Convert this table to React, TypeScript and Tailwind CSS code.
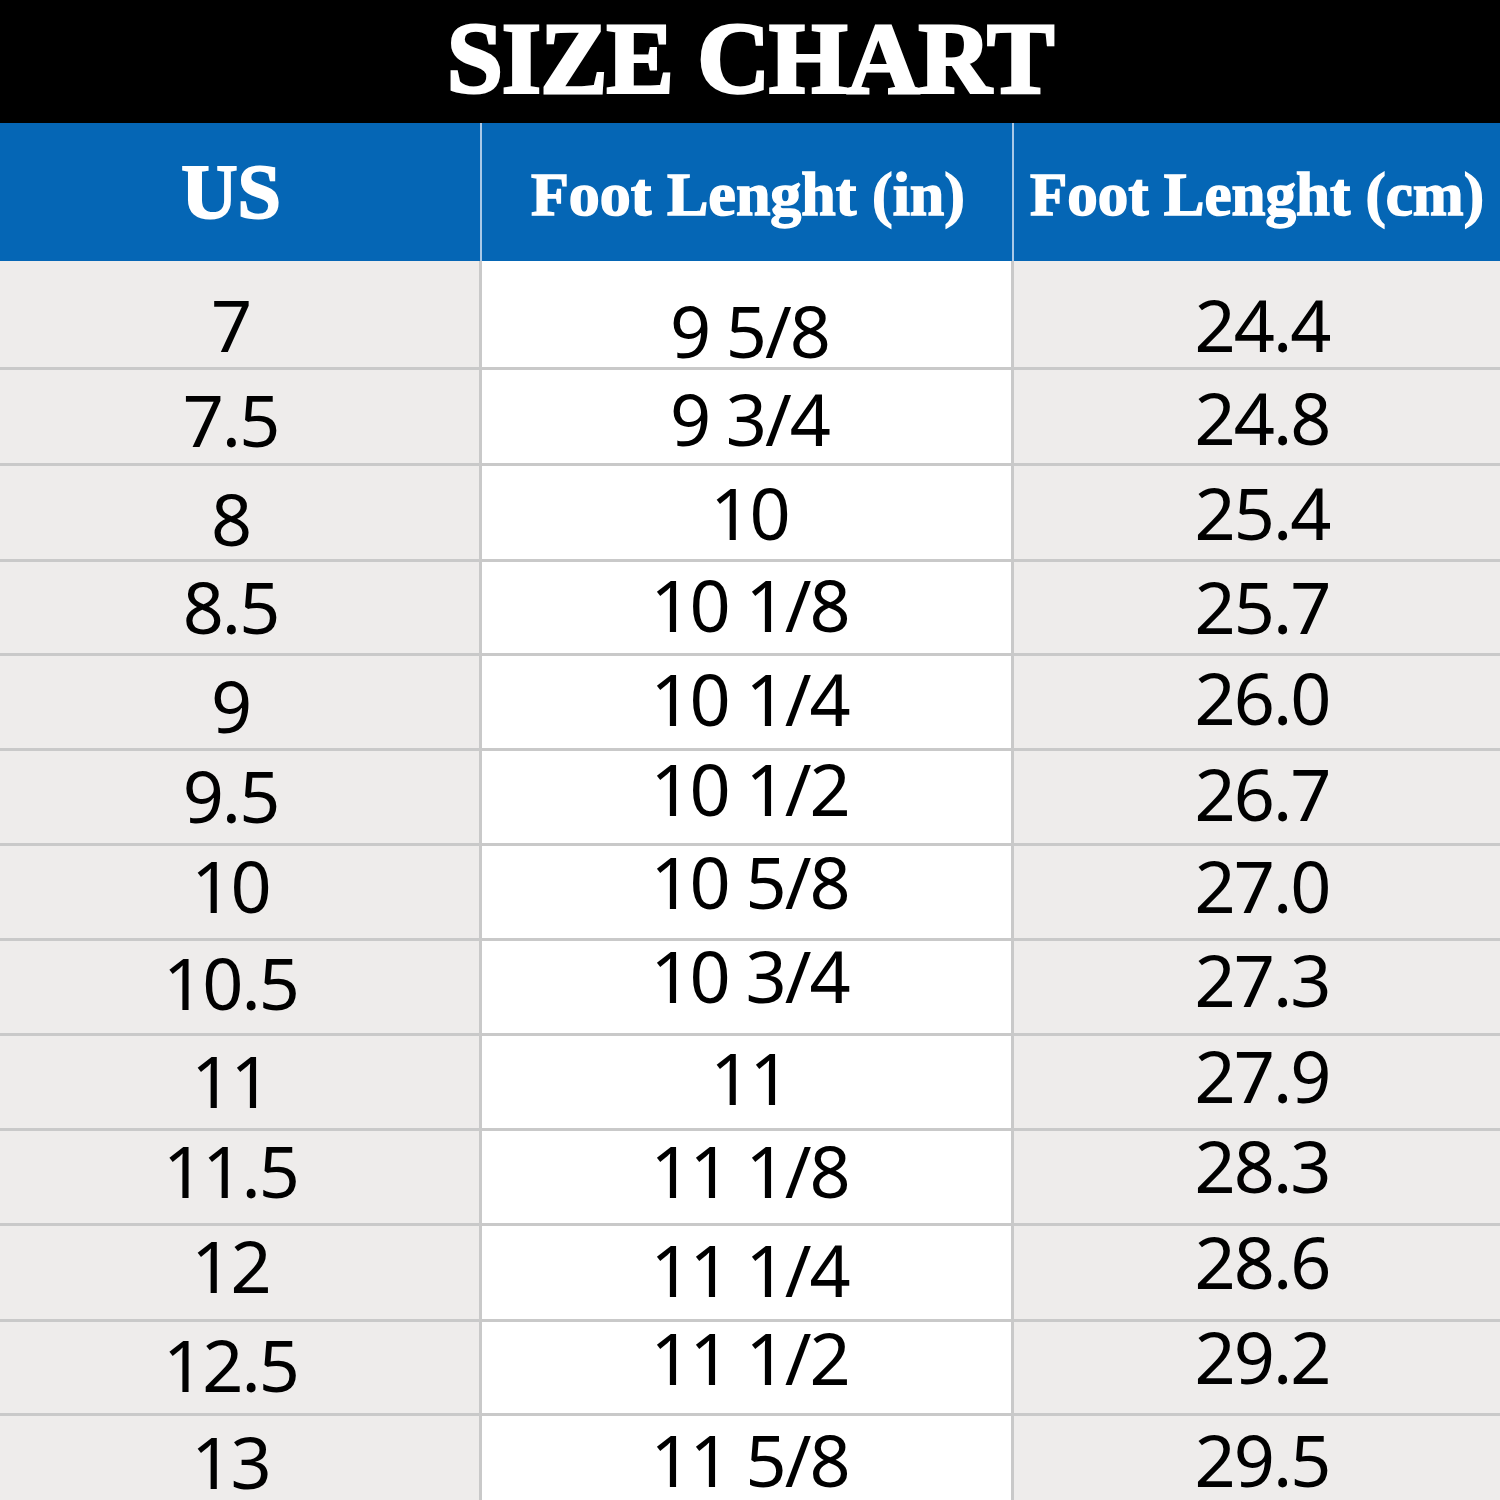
import React from "react";

type Row = { h: string; cells: [string, number][] };

const rows: Row[] = [
  { h: "h-[109px] border-b-[3px]", cells: [["7", 10], ["9 5/8", 16], ["24.4", 10]] },
  { h: "h-[96px] border-b-[3px]", cells: [["7.5", 2], ["9 3/4", 1], ["24.8", 0]] },
  { h: "h-[96px] border-b-[3px]", cells: [["8", 5], ["10", -1], ["25.4", -1]] },
  { h: "h-[94px] border-b-[3px]", cells: [["8.5", -2], ["10 1/8", -4], ["25.7", -2]] },
  { h: "h-[95px] border-b-[3px]", cells: [["9", 3], ["10 1/4", -4], ["26.0", -5]] },
  { h: "h-[95px] border-b-[3px]", cells: [["9.5", -2], ["10 1/2", -9], ["26.7", -4]] },
  { h: "h-[95px] border-b-[3px]", cells: [["10", -7], ["10 5/8", -11], ["27.0", -7]] },
  { h: "h-[95px] border-b-[3px]", cells: [["10.5", -5], ["10 3/4", -12], ["27.3", -8]] },
  { h: "h-[95px] border-b-[3px]", cells: [["11", -2], ["11", -5], ["27.9", -7]] },
  { h: "h-[95px] border-b-[3px]", cells: [["11.5", -7], ["11 1/8", -7], ["28.3", -12]] },
  { h: "h-[96px] border-b-[3px]", cells: [["12", -8], ["11 1/4", -4], ["28.6", -12]] },
  { h: "h-[94px] border-b-[3px]", cells: [["12.5", -4], ["11 1/2", -11], ["29.2", -12]] },
  { h: "flex-1 min-h-0", cells: [["13", 3], ["11 5/8", 1], ["29.5", 1]] },
];

const colCls = [
  "bg-[#eeeceb] border-r-[3px] border-[#c9c9c9] pr-[18px]",
  "bg-white border-r-[3px] border-[#c9c9c9] pl-[6px]",
  "bg-[#eeeceb] pl-[10px]",
];

const serif = "font-['Liberation_Serif',_'Times_New_Roman',_serif]";
const sans = "font-['Noto_Sans',_'Open_Sans',_sans-serif]";

export default function App() {
  return (
    <div className="w-[1500px] h-[1500px] overflow-hidden bg-white flex flex-col">
      <div className="h-[123px] shrink-0 bg-black flex items-center justify-center">
        <span
          className={`${serif} font-bold text-white text-[101px] leading-none tracking-[-1px] [-webkit-text-stroke:3px_white] mb-[4px]`}
        >
          SIZE CHART
        </span>
      </div>
      <div className="h-[138px] shrink-0 bg-[#0566b5] grid grid-cols-[482px_532px_486px]">
        <div className="flex items-center justify-center border-r-2 border-[#a9c9e8] pr-[18px]">
          <span className={`${serif} font-bold text-white text-[78px] leading-none [-webkit-text-stroke:2px_white]`}>US</span>
        </div>
        <div className="flex items-center justify-center border-r-2 border-[#a9c9e8] pt-[4px] pl-[2px]">
          <span className={`${serif} font-bold text-white text-[62px] leading-none [-webkit-text-stroke:1.5px_white]`}>
            Foot Lenght (in)
          </span>
        </div>
        <div className="flex items-center justify-center pt-[4px]">
          <span className={`${serif} font-bold text-white text-[61px] leading-none [-webkit-text-stroke:1.5px_white]`}>
            Foot Lenght (cm)
          </span>
        </div>
      </div>
      {rows.map((r, i) => (
        <div
          key={i}
          className={`${r.h} shrink-0 grid grid-cols-[482px_532px_486px] border-[#c9c9c9]`}
        >
          {r.cells.map(([t, dy], j) => (
            <div key={j} className={`flex items-center justify-center ${colCls[j]}`}>
              <span
                className={`${sans} text-black text-[72px] leading-none tracking-[-2px]`}
                style={{ transform: `translateY(${dy}px)` }}
              >
                {t}
              </span>
            </div>
          ))}
        </div>
      ))}
    </div>
  );
}
